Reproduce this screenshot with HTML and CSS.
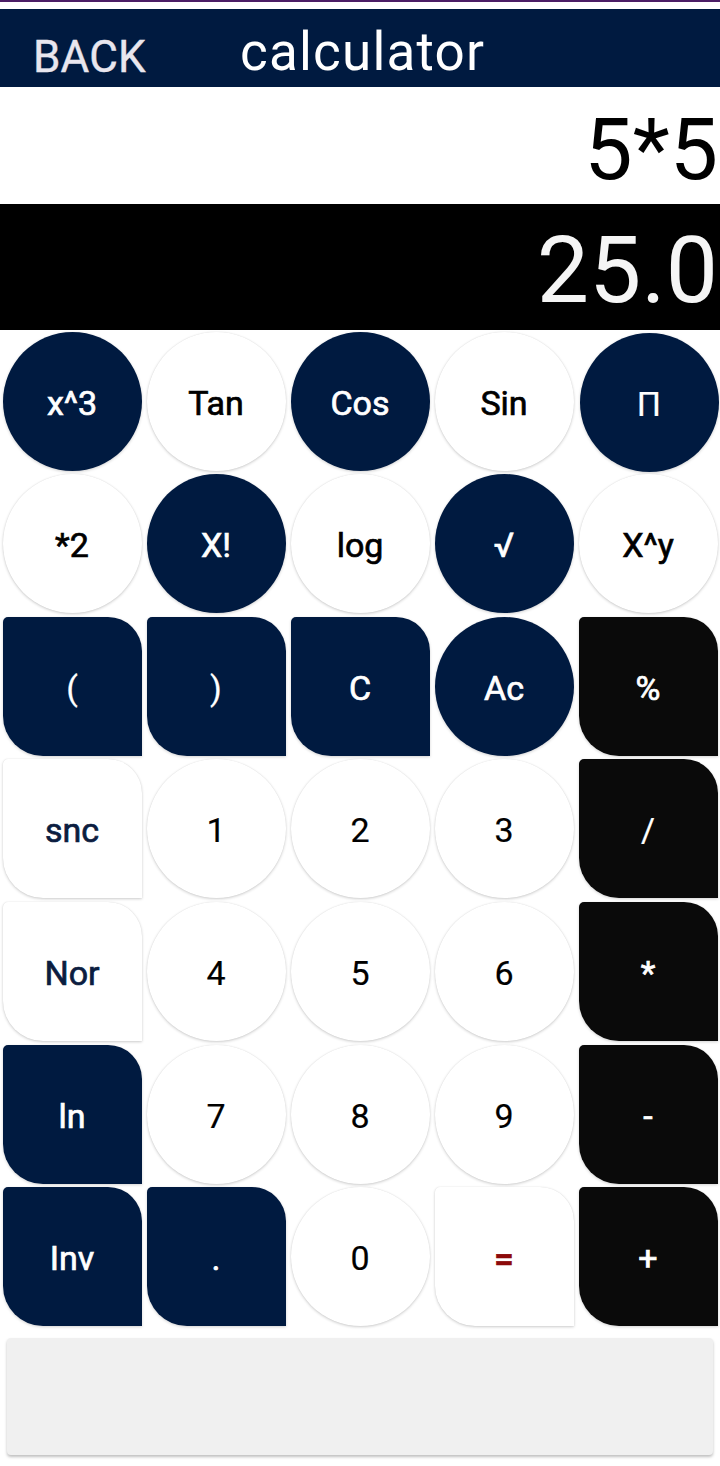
FILE: index.html
```html
<!DOCTYPE html>
<html>
<head>
<meta charset="utf-8">
<link rel="stylesheet" href="styles.css">
</head>
<body>
<div class="app">
  <div class="status"></div>
  <header class="topbar">
    <span class="back">BACK</span>
    <span class="title">calculator</span>
  </header>
  <div class="expr">5*5</div>
  <div class="result">25.0</div>
  <div class="pad">
    <button class="key round navy">x^3</button>
    <button class="key round white">Tan</button>
    <button class="key round navy">Cos</button>
    <button class="key round white">Sin</button>
    <button class="key round navy pi">Π</button>

    <button class="key round white">*2</button>
    <button class="key round navy">X!</button>
    <button class="key round white">log</button>
    <button class="key round navy">√</button>
    <button class="key round white">X^y</button>

    <button class="key leaf navy thin">(</button>
    <button class="key leaf navy thin">)</button>
    <button class="key leaf navy">C</button>
    <button class="key round navy">Ac</button>
    <button class="key leaf black">%</button>

    <button class="key leaf white navytext">snc</button>
    <button class="key round white digit">1</button>
    <button class="key round white digit">2</button>
    <button class="key round white digit">3</button>
    <button class="key leaf black thin">/</button>

    <button class="key leaf white navytext">Nor</button>
    <button class="key round white digit">4</button>
    <button class="key round white digit">5</button>
    <button class="key round white digit">6</button>
    <button class="key leaf black">*</button>

    <button class="key leaf navy">ln</button>
    <button class="key round white digit">7</button>
    <button class="key round white digit">8</button>
    <button class="key round white digit">9</button>
    <button class="key leaf black">-</button>

    <button class="key leaf navy">Inv</button>
    <button class="key leaf navy">.</button>
    <button class="key round white digit">0</button>
    <button class="key leaf white red">=</button>
    <button class="key leaf black">+</button>
  </div>
  <div class="footer"></div>
</div>
</body>
</html>
```
FILE: styles.css
```css
* { box-sizing: border-box; }
html, body { margin: 0; padding: 0; background: #ffffff; }
body { font-family: Roboto, "Liberation Sans", sans-serif; }
.app { width: 720px; height: 1466px; display: flex; flex-direction: column; background: #fff; }
.status { height: 9px; border-top: 2px solid #4b1d66; background: #fff; }
.topbar {
  height: 78px; background: #001a40; display: flex; align-items: center;
  padding-left: 33px; padding-top: 18px;
}
.back { font-size: 44px; color: #e9e6ee; width: 207px; letter-spacing: 0.2px; -webkit-text-stroke: 0.4px #e9e6ee; }
.title { font-size: 53px; color: #ffffff; letter-spacing: 1.2px; margin-top: -10px; }
.expr {
  height: 117px; text-align: right; font-size: 86px; color: #000;
  line-height: 117px; padding-right: 2px; padding-top: 4px;
}
.result {
  height: 126px; background: #000; color: #f5f5f5; text-align: right;
  font-size: 93px; line-height: 126px; padding-right: 2px; padding-top: 4px;
}
.pad {
  height: 998px;
  display: grid;
  grid-template-columns: repeat(5, 144px);
  grid-template-rows: repeat(7, 1fr);
}
.key {
  width: 139px; height: 139px; align-self: center; justify-self: center;
  border: none; font-family: Roboto, "Liberation Sans", sans-serif;
  font-size: 34px; font-weight: 400; padding: 0; margin: 0;
  display: flex; align-items: center; justify-content: center;
  -webkit-text-stroke: 0.7px currentColor;
  padding-top: 3px;
}
.round { border-radius: 50%; }
.leaf { border-radius: 5px 34px 0 40px; }
.navy { background: #001a40; color: #ffffff; box-shadow: 0 1px 3px rgba(0,0,0,0.18); }
.black { background: #0a0a0a; color: #ffffff; box-shadow: 0 1px 3px rgba(0,0,0,0.18); }
.white { background: #ffffff; color: #000; box-shadow: 0 1px 3px rgba(0,0,0,0.2), 0 0 1px rgba(0,0,0,0.1); }
.digit { -webkit-text-stroke: 0.2px currentColor; }
.navytext { color: #0b1d40; }
.red { color: #8c0a0a; font-weight: 700; }
.thin { -webkit-text-stroke: 0.2px currentColor; }
.pi { -webkit-text-stroke: 0.2px currentColor; margin: 3px 0 0 2px; }
.footer {
  margin: 10px 7px 0 7px; height: 117px; background: #f0f0f0; border-radius: 4px;
  box-shadow: 0 2px 3px rgba(0,0,0,0.25);
}
```
